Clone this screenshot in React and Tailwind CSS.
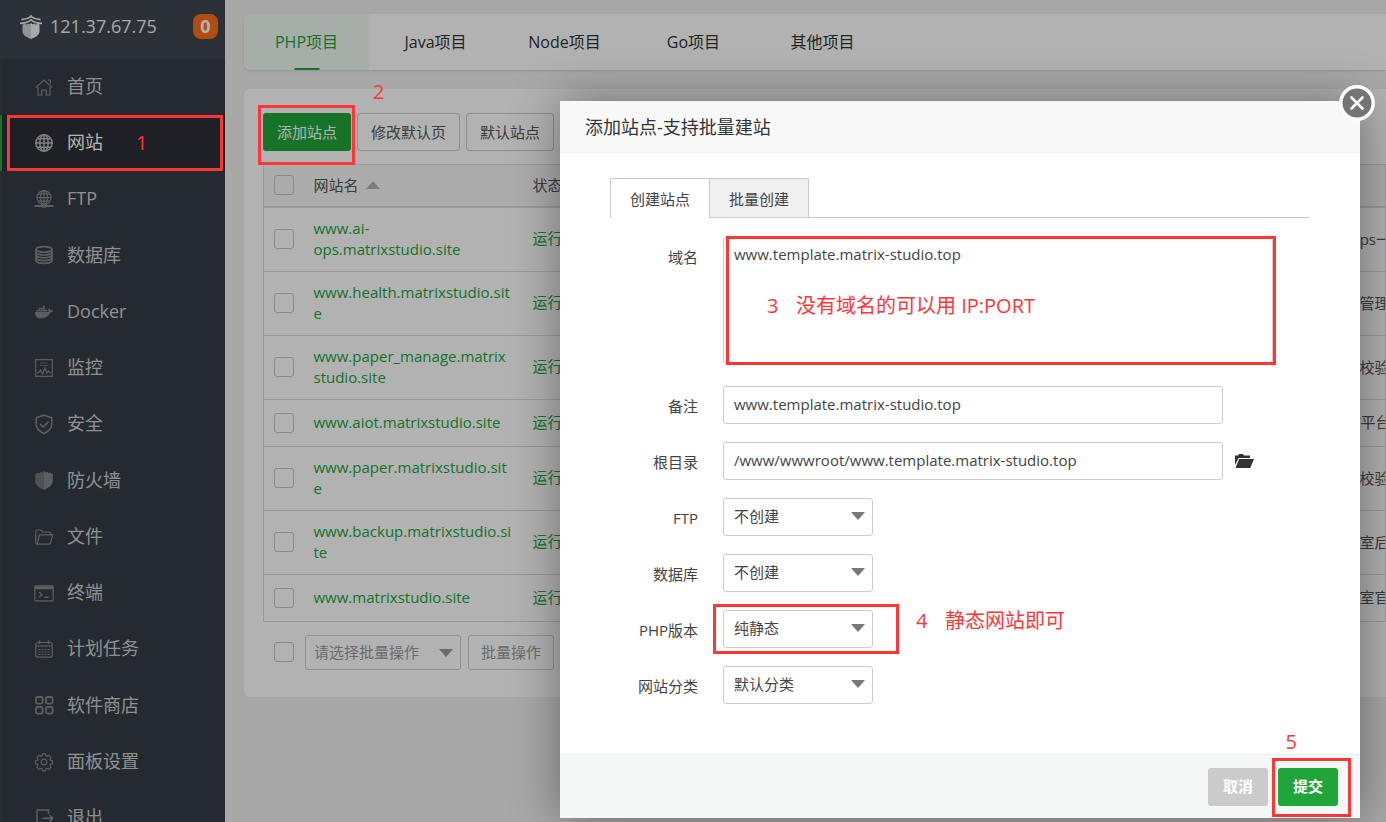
import React, { useState } from 'react';
import { FaDocker } from 'react-icons/fa';

const line = { fill: 'none', stroke: 'currentColor', strokeWidth: 1.2 };

const icons = {
  home: (
    <g {...line}>
      <path d="M.7 9.6 9 2l8.3 7.6" />
      <path d="M13.2 2.2h2.3v3.6M3 9v8h3.8v-5h4.4v5H15V9" />
    </g>
  ),
  globe: (
    <g {...line} strokeWidth="1.5">
      <circle cx="9" cy="9" r="8.2" />
      <ellipse cx="9" cy="9" rx="4.2" ry="8.2" />
      <path d="M9 .8v16.4M.8 9h16.4M2 4.8h14M2 13.2h14" />
    </g>
  ),
  ftp: (
    <g {...line}>
      <circle cx="9" cy="7.6" r="7" />
      <ellipse cx="9" cy="7.6" rx="3.6" ry="7" />
      <path d="M9 .6v14M2 7.6h14M3 4h12M3 11.2h12" />
      <path d="M-.5 16h19" strokeWidth="2" />
      <path d="M6.5 16h5" strokeWidth="3.4" />
    </g>
  ),
  database: (
    <g {...line} strokeWidth="1.6">
      <ellipse cx="9" cy="3.4" rx="8" ry="2.8" />
      <path d="M1 3.4v11.2c0 1.6 3.6 2.8 8 2.8s8-1.2 8-2.8V3.4" />
      <path d="M1 6.2C1 7.8 4.6 9 9 9s8-1.2 8-2.8M1 9c0 1.6 3.6 2.8 8 2.8s8-1.2 8-2.8M1 11.8c0 1.6 3.6 2.8 8 2.8s8-1.2 8-2.8" />
    </g>
  ),
  monitor: (
    <g {...line}>
      <path d="M.7.7h16.6v16.6H.7z" />
      <path d="M5 4h8M5 6.5h8" opacity=".6" />
      <path d="M2 13.5h2l1.500-2.500 2 4L10 9l2 5 1.500-2 1 1.500H16" />
    </g>
  ),
  safe: (
    <g {...line} strokeWidth="1.6">
      <path d="M9 .2 16.8 2.8v6.400c0 4-3 7-7.800 9.300C4.200 16.200 1.200 13.200 1.200 9.200V2.800z" />
      <path d="m4.800 8.800 3.200 3.200 5.600-5.400" />
    </g>
  ),
  firewall: (
    <g fill="currentColor">
      <path d="M9 0 7.500 1.600 5.500 1 4.500 2.300 2.500 1.700.2 3v7c0 4 3.500 6.500 8.800 9z" opacity=".75" />
      <path d="m9 0 1.500 1.600 2-.6 1 1.300 2-.6L17.800 3v7c0 4-3.500 6.500-8.800 9z" />
    </g>
  ),
  folder: (
    <g {...line}>
      <path d="M2.600 16.200C1.400 16.200.8 15.500.8 14.400V3.600C.8 2.600 1.400 2 2.400 2h3.500L7.800 4h6.400c1 0 1.600.6 1.600 1.600V7" />
      <path d="M4.400 6.800h13.400l-2.400 8.200c-.2.800-.8 1.200-1.600 1.200H2.400z" />
    </g>
  ),
  terminal: (
    <g {...line}>
      <rect x="-.2" y="1.800" width="18.400" height="15" rx="1" />
      <path d="M0 3.800h18" strokeWidth="3" />
      <path d="m4 8 3 2.700-3 2.600M9.500 13.300h4" strokeWidth="1.400" />
    </g>
  ),
  calendar: (
    <g {...line}>
      <rect x=".8" y="2.500" width="16.400" height="14.700" rx="2" />
      <path d="M.8 6h16.400" />
      <path d="M4.500.5v3.500M13.500.5v3.500" strokeWidth="1.600" />
      <path d="M3.500 9.500h11M3.500 12h11M3.500 14.500h11" strokeDasharray="2 1" />
    </g>
  ),
  store: (
    <g {...line} strokeWidth="1.8">
      <rect x="1" y="1" width="6.600" height="6.600" rx="1.500" />
      <rect x="11" y="1" width="6.600" height="6.600" rx="1.500" />
      <rect x="1" y="11" width="6.600" height="6.600" rx="1.500" />
      <rect x="11" y="11" width="6.600" height="6.600" rx="1.500" />
    </g>
  ),
  settings: (
    <g {...line}>
      <path d="M7.500.8h3l.5 2 1.200.5 1.800-1 2 2-1 1.800.5 1.200 2 .5v3l-2 .5-.5 1.200 1 1.800-2 2-1.800-1-1.200.5-.5 2h-3l-.5-2-1.200-.5-1.800 1-2-2 1-1.800-.5-1.200-2-.5v-3l2-.5.5-1.200-1-1.800 2-2 1.800 1L7 2.800z" />
      <circle cx="9" cy="9" r="2.800" />
    </g>
  ),
  exit: (
    <g {...line} strokeWidth="1.5">
      <path d="M13.500 5V1H2v16h11.500v-3.500" />
      <path d="M7.500 9.300h10M14.500 6l3.300 3.300-3.300 3.300" />
    </g>
  ),
};

const menu = [
  { icon: 'home', label: '首页' },
  { icon: 'globe', label: '网站' },
  { icon: 'ftp', label: 'FTP' },
  { icon: 'database', label: '数据库' },
  { icon: 'docker', label: 'Docker' },
  { icon: 'monitor', label: '监控' },
  { icon: 'safe', label: '安全' },
  { icon: 'firewall', label: '防火墙' },
  { icon: 'folder', label: '文件' },
  { icon: 'terminal', label: '终端' },
  { icon: 'calendar', label: '计划任务' },
  { icon: 'store', label: '软件商店' },
  { icon: 'settings', label: '面板设置' },
  { icon: 'exit', label: '退出' },
];

const projects = ['PHP项目', 'Java项目', 'Node项目', 'Go项目', '其他项目'];

const sites = [
  { name: 'www.ai-ops.matrixstudio.site', remark: 'AI-Ops一站式平台' },
  { name: 'www.health.matrixstudio.site', remark: '健康管理系统' },
  { name: 'www.paper_manage.matrixstudio.site', remark: '论文校验管理' },
  { name: 'www.aiot.matrixstudio.site', remark: 'AIoT平台' },
  { name: 'www.paper.matrixstudio.site', remark: '论文校验系统' },
  { name: 'www.backup.matrixstudio.site', remark: '工作室后台' },
  { name: 'www.matrixstudio.site', remark: '工作室官网' },
];

function MenuIcon({ name }) {
  if (name === 'docker') {
    return <FaDocker className="h-5 w-[18px] shrink-0" />;
  }
  return (
    <svg viewBox="0 0 18 18" className="h-[18px] w-[18px] shrink-0 overflow-visible" aria-hidden="true">
      {icons[name]}
    </svg>
  );
}

function Sidebar() {
  return (
    <aside className="w-[225px] shrink-0 overflow-hidden bg-[#363d46]">
      <div className="flex h-[59px] items-center bg-[#3f4650] pr-[7px] pb-[6px] pl-5">
        <svg viewBox="0 0 22 24" className="h-6 w-[22px] text-[#f4f4f4]" aria-hidden="true">
          <path d="M11 0v2" fill="none" stroke="currentColor" strokeWidth="1.4" />
          <path d="M1.500 4.600C5 4.400 8.500 3.400 11 1.600c2.500 1.800 6 2.800 9.500 3M0 8.400c4.500-.2 8.500-1.600 11-3.600 2.500 2 6.500 3.400 11 3.600" fill="none" stroke="currentColor" strokeWidth="1.600" />
          <path d="M2.500 9.500 5 8.700l1 1.100 2-1.300 1 1 2-1.500V24c-5-2-8.500-4-8.500-8z" fill="currentColor" opacity=".82" />
          <path d="M19.500 9.500 17 8.700l-1 1.100-2-1.300-1 1L11 8v16c5-2 8.500-4 8.500-8z" fill="currentColor" />
        </svg>
        <span className="ml-2 text-[18px] text-[#f0f0f0]">121.37.67.75</span>
        <span className="ml-auto flex h-[25px] w-[25px] items-center justify-center rounded-lg bg-[#ff6d1c] text-[18px] font-bold text-white">
          0
        </span>
      </div>
      <nav className="grid auto-rows-[56px_56px_56px_57px]">
        {menu.map((item) => {
          const active = item.label === '网站';
          return (
            <a
              key={item.label}
              href="#"
              className={`flex items-center gap-[14px] border-l-2 pb-px pl-[33px] text-[18px] ${
                active
                  ? 'border-[#20a53a] bg-[#2c2f36] text-white'
                  : 'border-[#3b3f41] text-[#cdcfd1]'
              }`}
            >
              <span className={active ? 'text-[#b8b8b8]' : 'text-[#85878a]'}>
                <MenuIcon name={item.icon} />
              </span>
              {item.label}
            </a>
          );
        })}
      </nav>
    </aside>
  );
}

function CheckBox({ label }) {
  return (
    <input
      type="checkbox"
      aria-label={label}
      className="block h-5 w-5 appearance-none rounded-[3px] border border-[#c4c4c4] checked:bg-[#20a53a]"
    />
  );
}

function Caret({ className }) {
  return (
    <svg viewBox="0 0 14 8" className={`pointer-events-none absolute h-2 w-[14px] ${className}`} aria-hidden="true">
      <path d="M0 0h14L7 8z" fill="currentColor" />
    </svg>
  );
}

function SiteTable() {
  return (
    <table className="w-full table-fixed border-collapse border border-[#dcdcdc] text-[15px] leading-[21px] text-[#555]">
      <colgroup>
        <col className="w-10" />
        <col className="w-[219px]" />
        <col className="w-[797px]" />
        <col />
      </colgroup>
      <thead>
        <tr className="h-[42px] border-b-2 border-[#dcdcdc] bg-[#f6f6f6] text-left">
          <th className="pl-[10px]"><CheckBox label="全选" /></th>
          <th className="pl-[10px] font-normal">
            <span className="inline-flex items-center gap-[7px]">
              网站名
              <svg viewBox="0 0 14 8" className="h-2 w-[14px]" aria-hidden="true">
                <path d="M0 8h14L7 0z" fill="#b4b4b4" />
              </svg>
            </span>
          </th>
          <th className="pl-[10px] font-normal">状态</th>
          <th />
        </tr>
      </thead>
      <tbody>
        {sites.map((site) => (
          <tr key={site.name} className="border-b border-[#dcdcdc]">
            <td className="pl-[10px]"><CheckBox label={site.name} /></td>
            <td className="pt-[10px] pr-[11px] pb-[11px] pl-[10px]">
              <a href="#" className="block break-words text-[#20a53a]">{site.name}</a>
            </td>
            <td className="pt-3 pb-[13px] pl-[10px]">
              <a href="#" className="text-[#20a53a]">运行中</a>
            </td>
            <td className="overflow-hidden pl-[10px] whitespace-nowrap">{site.remark}</td>
          </tr>
        ))}
      </tbody>
    </table>
  );
}

function Main() {
  const [project, setProject] = useState('PHP项目');
  const buttonClass = 'h-[38px] shrink-0 rounded-[3px] border border-[#ccc] px-[13px] text-[15px] text-[#555]';
  return (
    <main className="min-w-0 flex-1 overflow-hidden bg-[#f1f1f1] pt-[14px] pl-[19px]">
      <div className="flex h-14 gap-1 overflow-hidden rounded-l-md bg-white shadow-sm">
        {projects.map((name) => (
          <button
            key={name}
            onClick={() => setProject(name)}
            className={`relative w-[125px] shrink-0 text-[16px] ${
              project === name ? 'bg-[#eff9f2] text-[#20a53a]' : 'text-[#333]'
            }`}
          >
            {name}
            {project === name && (
              <span className="absolute bottom-0 left-1/2 h-[2px] w-[25px] -translate-x-1/2 bg-[#20a53a]" />
            )}
          </button>
        ))}
      </div>

      <section className="mt-[19px] rounded-l-md bg-white pt-6 pb-[27px] pl-[19px]">
        <div className="mb-[13px] flex gap-[6px]">
          <button className="h-[38px] shrink-0 rounded-[3px] bg-[#20a53a] px-[14px] text-[15px] text-white">添加站点</button>
          <button className={buttonClass}>修改默认页</button>
          <button className={buttonClass}>默认站点</button>
          <button className={buttonClass}>PHP命令行版本</button>
        </div>
        <SiteTable />
        <div className="mt-[13px] flex items-center pl-[11px]">
          <CheckBox label="选择全部站点" />
          <div className="relative ml-[11px] text-[#999]">
            <select aria-label="批量操作" className="h-[35px] w-[156px] appearance-none rounded-[3px] border border-[#d0d0d0] px-2 text-[15px]">
              <option>请选择批量操作</option>
            </select>
            <Caret className="top-[14px] right-2" />
          </div>
          <button className="ml-[7px] h-[35px] rounded-[3px] border border-[#d0d0d0] px-3 text-[15px] text-[#999]">批量操作</button>
        </div>
      </section>
    </main>
  );
}

function Field({ id, label, children }) {
  return (
    <div className="flex">
      <label htmlFor={id} className="mr-[25px] -mb-[2px] flex h-10 w-[88px] shrink-0 items-center justify-end">
        {label}
      </label>
      {children}
    </div>
  );
}

function SelectField({ id, label, value }) {
  return (
    <Field id={id} label={label}>
      <div className="relative">
        <select id={id} className="h-[38px] w-[150px] appearance-none rounded-[3px] border border-[#ccc] bg-white px-[10px] pb-[2px]">
          <option>{value}</option>
        </select>
        <Caret className="top-[14px] right-2 text-[#777]" />
      </div>
    </Field>
  );
}

// 红色标注
function Mark({ className, children }) {
  return (
    <span className={`pointer-events-none absolute text-[20px] leading-6 whitespace-nowrap text-[#fd3737] ${className}`}>
      {children}
    </span>
  );
}

function MarkBox({ className }) {
  return <div className={`pointer-events-none absolute border-3 border-[#fd3737] ${className}`} />;
}

function AddSiteDialog() {
  const [domain, setDomain] = useState('www.template.matrix-studio.top');
  const [note, setNote] = useState('www.template.matrix-studio.top');
  const [path, setPath] = useState('/www/wwwroot/www.template.matrix-studio.top');
  const inputClass = 'h-[38px] w-[500px] rounded-[3px] border border-[#ccc] px-[10px] pb-[2px] outline-none';

  return (
    <div
      role="dialog"
      aria-label="添加站点"
      className="absolute top-[101px] right-[26px] w-[800px] rounded-[2px] bg-white text-[15px] text-[#444] shadow-[1px_1px_50px_rgba(0,0,0,0.4)]"
    >
      <h2 className="flex h-[52px] items-center border-b border-[#eee] bg-[#f8f8f8] px-[25px] pt-[2px] text-[18px] text-[#333]">
        添加站点-支持批量建站
      </h2>
      <button aria-label="关闭" className="absolute -top-4 -right-[15px] h-9 w-9">
        <svg viewBox="0 0 36 36" className="h-9 w-9">
          <circle cx="18" cy="18" r="16.2" fill="#747474" stroke="#fff" strokeWidth="3.400" />
          <path d="m12.500 12.500 11 11M23.500 12.500l-11 11" stroke="#fff" strokeWidth="2.600" strokeLinecap="round" />
        </svg>
      </button>

      <form id="site-form" className="px-[50px] pt-[25px] pb-[50px]">
        <div className="flex border-b border-[#c8c8d8]">
          <button type="button" className="-mb-px h-10 w-[100px] border border-b-0 border-[#c8c8d8] bg-white pt-[2px]">创建站点</button>
          <button type="button" className="-ml-px h-[39px] w-[100px] border border-b-0 border-[#c8c8d8] bg-[#f0f0f0] pt-[2px]">批量创建</button>
        </div>
        <div className="mt-[19px] flex flex-col gap-[18px]">
          <Field id="domain" label="域名">
            <textarea
              id="domain"
              value={domain}
              onChange={(e) => setDomain(e.target.value)}
              className="mb-[5px] h-[126px] w-[550px] resize-none rounded-[3px] border border-[#ccc] px-[10px] py-[6px] leading-[21px] outline-none"
            />
          </Field>
          <Field id="note" label="备注">
            <input id="note" value={note} onChange={(e) => setNote(e.target.value)} className={inputClass} />
          </Field>
          <Field id="path" label="根目录">
            <input id="path" value={path} onChange={(e) => setPath(e.target.value)} className={inputClass} />
            <button type="button" aria-label="选择目录" className="ml-3">
              <svg viewBox="0 0 19 14" className="h-[14px] w-[19px]">
                <path d="M0 11V1.500h3L4 0h4l1 1.500h6V4H3.500z" fill="#333" />
                <path d="M4 5h15l-3.800 9H.5z" fill="#333" />
              </svg>
            </button>
          </Field>
          <SelectField id="ftp" label="FTP" value="不创建" />
          <SelectField id="database" label="数据库" value="不创建" />
          <SelectField id="php" label="PHP版本" value="纯静态" />
          <SelectField id="category" label="网站分类" value="默认分类" />
        </div>
      </form>

      <footer className="flex justify-end gap-[10px] border-t border-[#eceeee] bg-[#f6f8f8] pt-[13px] pr-[22px] pb-3 font-bold text-white">
        <button className="h-[38px] w-[60px] rounded-[3px] bg-[#cbcbcb] pb-[2px]">取消</button>
        <button type="submit" form="site-form" className="h-[38px] w-[60px] rounded-[3px] bg-[#20a53a] pb-[2px]">提交</button>
      </footer>

      <MarkBox className="top-[135px] left-[166px] h-[129px] w-[550px]" />
      <Mark className="top-[193px] left-[207px]">3</Mark>
      <Mark className="top-[193px] left-[236px]">没有域名的可以用 IP:PORT</Mark>
      <MarkBox className="top-[503px] left-[153px] h-[50px] w-[186px]" />
      <Mark className="top-[508px] left-[356px]">4</Mark>
      <Mark className="top-[508px] left-[385px]">静态网站即可</Mark>
      <MarkBox className="right-[9px] bottom-px h-[59px] w-[79px]" />
      <Mark className="right-[63px] bottom-16">5</Mark>
    </div>
  );
}

export default function App() {
  return (
    <div className="relative flex h-screen overflow-hidden font-['Open_Sans','Noto_Sans_CJK_SC',sans-serif]">
      <Sidebar />
      <Main />
      <div className="absolute inset-0 bg-black/30" />
      <AddSiteDialog />
      <MarkBox className="top-[115px] left-[7px] h-14 w-[216px]" />
      <Mark className="top-[131px] left-[136px]">1</Mark>
      <MarkBox className="top-[105px] left-[258px] h-[60px] w-[97px]" />
      <Mark className="top-[80px] left-[373px]">2</Mark>
    </div>
  );
}
